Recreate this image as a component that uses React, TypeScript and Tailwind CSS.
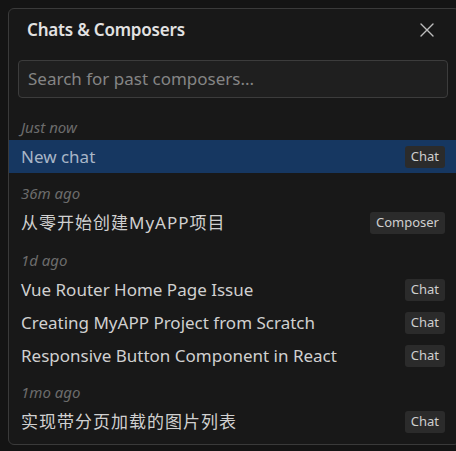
import React from 'react';

type Item = { title: string; kind: 'Chat' | 'Composer'; selected?: boolean; cjk?: boolean };
type Group = { label: string; items: Item[] };

const groups: Group[] = [
  { label: 'Just now', items: [{ title: 'New chat', kind: 'Chat', selected: true }] },
  { label: '36m ago', items: [{ title: '从零开始创建MyAPP项目', kind: 'Composer', cjk: true }] },
  {
    label: '1d ago',
    items: [
      { title: 'Vue Router Home Page Issue', kind: 'Chat' },
      { title: 'Creating MyAPP Project from Scratch', kind: 'Chat' },
      { title: 'Responsive Button Component in React', kind: 'Chat' },
    ],
  },
  { label: '1mo ago', items: [{ title: '实现带分页加载的图片列表', kind: 'Chat', cjk: true }] },
];

const font = { fontFamily: '"Noto Sans", "Noto Sans CJK SC", sans-serif' };

export default function App() {
  return (
    <div className="w-[456px] h-[451px] overflow-hidden bg-[#141414] pl-[8px] pt-[8px]" style={font}>
      <div className="w-[452px] h-[437px] border border-[#3a3a3a] rounded-md bg-[#181818] flex flex-col">
        {/* Header */}
        <div className="h-[42px] flex items-center justify-between pl-[18px] pr-[25px]">
          <div className="text-[17px] font-semibold text-[#e2e2e2] tracking-[-0.2px]">Chats &amp; Composers</div>
          <svg width="14" height="14" viewBox="0 0 14 14" className="text-[#bdbdbd]">
            <path d="M1 1 L13 13 M13 1 L1 13" stroke="currentColor" strokeWidth="1.4" strokeLinecap="round" />
          </svg>
        </div>

        {/* Search */}
        <div className="mt-[9px] ml-[9px] w-[430px] h-[38px] rounded-[4px] border border-[#3c3c3c] bg-[#1f1f1f] flex items-center px-[9px]">
          <span className="text-[17px] text-[#858585]">Search for past composers...</span>
        </div>

        {/* List */}
        <div className="pt-[8.5px]">
          {groups.map((g) => (
            <div key={g.label}>
              <div className="pt-[10px] pl-[12px] h-[33.5px] text-[15px] leading-[20px] italic text-[#6c6c6c]">
                {g.label}
              </div>
              {g.items.map((it) => (
                <div
                  key={it.title}
                  className={
                    'h-[33px] flex items-center justify-between pl-[12px] pr-[14px] ' +
                    (it.selected ? 'bg-[#163761]' : '')
                  }
                >
                  <span
                    className={
                      'text-[17px] ' +
                      (it.cjk ? 'tracking-[1px] ' : '') +
                      (it.selected ? 'text-[#a9b6c7]' : 'text-[#d0d0d0]')
                    }
                  >
                    {it.title}
                  </span>
                  <span className="h-[22px] px-[6px] flex items-center rounded-[3px] bg-[#2b2b2b] text-[13px] text-[#cfcfcf]">
                    {it.kind}
                  </span>
                </div>
              ))}
            </div>
          ))}
        </div>
      </div>
    </div>
  );
}
